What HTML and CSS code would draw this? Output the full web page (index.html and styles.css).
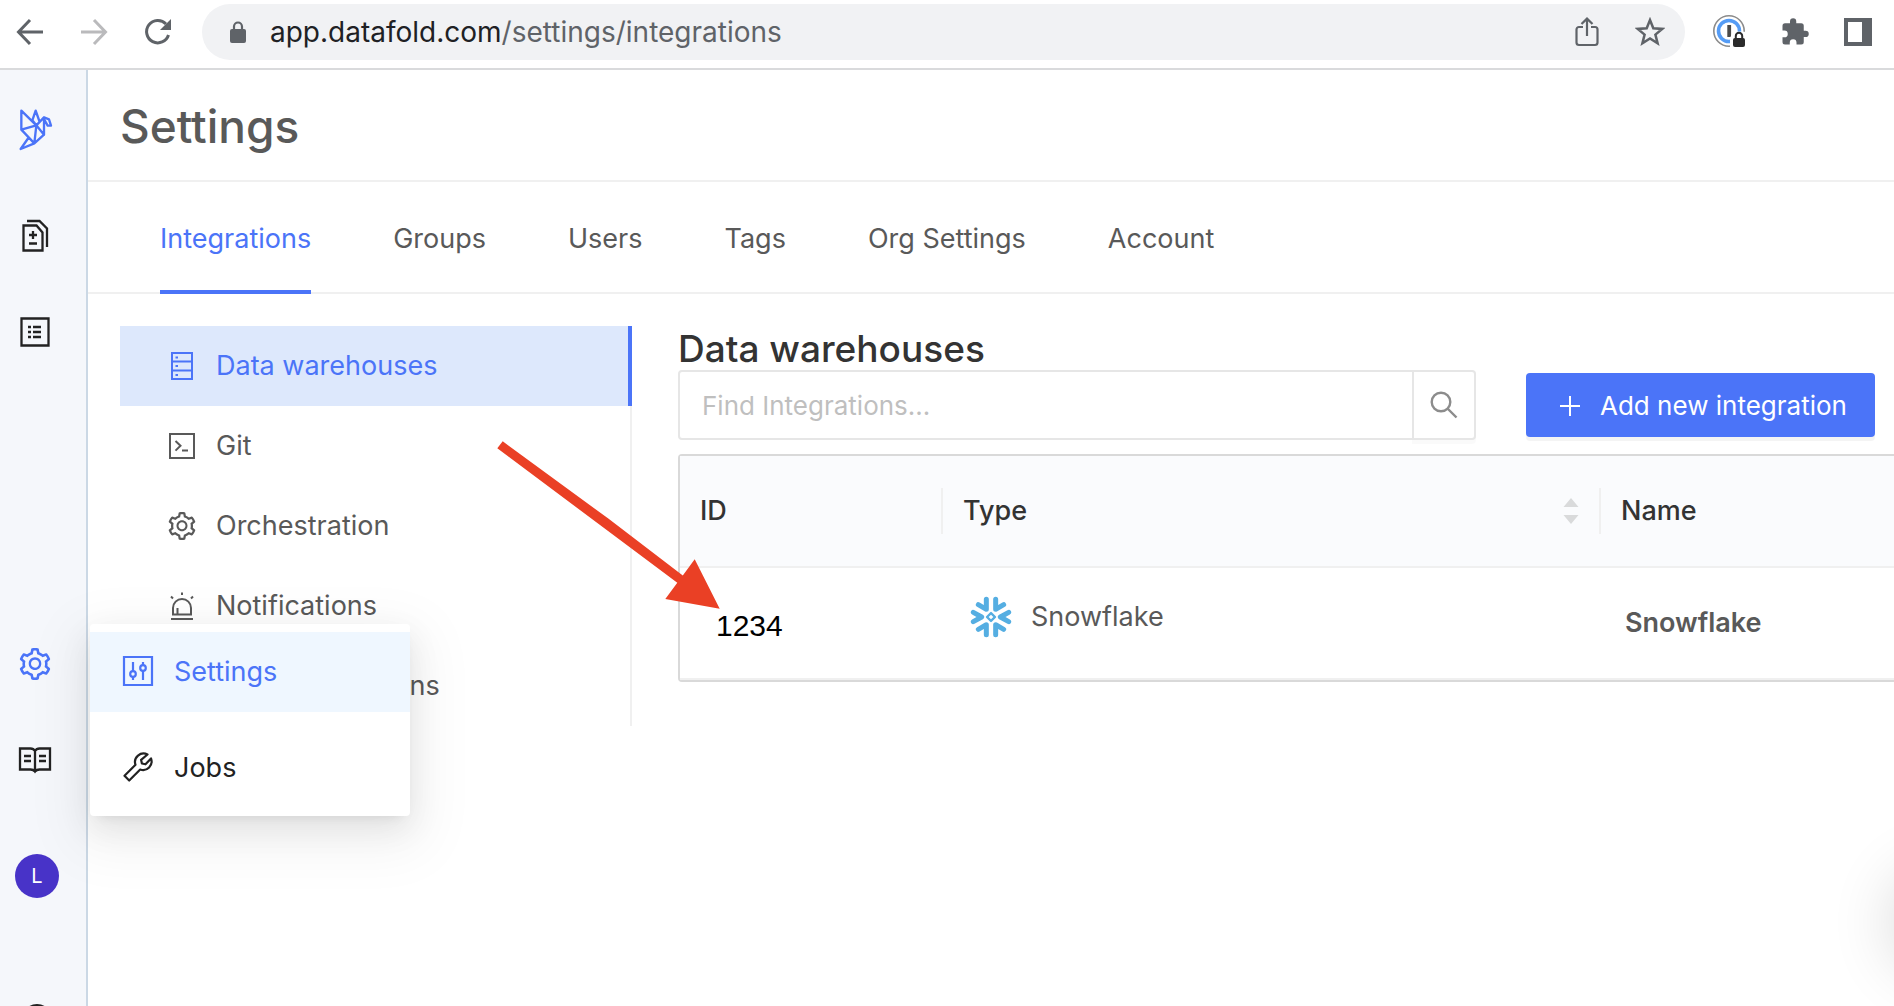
FILE: index.html
```html
<!DOCTYPE html>
<html lang="en">
<head>
<meta charset="utf-8">
<title>Settings – Integrations</title>
<link rel="stylesheet" href="styles.css">
</head>
<body>
<svg class="sprite" aria-hidden="true">
  <symbol id="gear" viewBox="64 64 896 896"><path fill="currentColor" d="M924.8 625.7l-65.5-56c3.1-19 4.7-38.4 4.7-57.8s-1.6-38.8-4.7-57.8l65.5-56a32.03 32.03 0 009.3-35.2l-.9-2.6a443.74 443.74 0 00-79.7-137.9l-1.8-2.1a32.12 32.12 0 00-35.1-9.5l-81.3 28.9c-30-24.6-63.5-44-99.7-57.6l-15.7-85a32.05 32.05 0 00-25.8-25.7l-2.7-.5c-52.1-9.4-106.9-9.4-159 0l-2.7.5a32.05 32.05 0 00-25.8 25.7l-15.8 85.4a351.86 351.86 0 00-99 57.4l-81.9-29.1a32 32 0 00-35.1 9.5l-1.8 2.1a446.02 446.02 0 00-79.7 137.9l-.9 2.6c-4.5 12.5-.8 26.5 9.3 35.2l66.3 56.6c-3.1 18.8-4.6 38-4.6 57.1 0 19.2 1.5 38.4 4.6 57.1L99 625.5a32.03 32.03 0 00-9.3 35.2l.9 2.6c18.1 50.4 44.9 96.9 79.7 137.9l1.8 2.1a32.12 32.12 0 0035.1 9.5l81.9-29.1c29.8 24.5 63.1 43.9 99 57.4l15.8 85.4a32.05 32.05 0 0025.8 25.7l2.7.5a449.4 449.4 0 00159 0l2.7-.5a32.05 32.05 0 0025.8-25.7l15.7-85a350 350 0 0099.7-57.6l81.3 28.9a32 32 0 0035.1-9.5l1.8-2.1c34.8-41.1 61.6-87.5 79.7-137.9l.9-2.6c4.5-12.3.8-26.3-9.3-35zM788.3 465.9c2.5 15.1 3.8 30.6 3.8 46.1s-1.3 31-3.8 46.1l-6.6 40.1 74.7 63.9a370.03 370.03 0 01-42.6 73.6L721 702.8l-31.4 25.8c-23.9 19.6-50.5 35-79.3 45.8l-38.1 14.3-17.9 97a377.5 377.5 0 01-85 0l-17.9-97.2-37.8-14.5c-28.5-10.8-55-26.2-78.7-45.7l-31.4-25.9-93.4 33.2c-17-22.9-31.2-47.6-42.6-73.6l75.5-64.5-6.5-40c-2.4-14.9-3.7-30.3-3.7-45.5 0-15.3 1.2-30.6 3.7-45.5l6.5-40-75.5-64.5c11.3-26.1 25.6-50.7 42.6-73.6l93.4 33.2 31.4-25.9c23.7-19.5 50.2-34.9 78.7-45.7l37.9-14.3 17.9-97.2c28.1-3.2 56.8-3.2 85 0l17.9 97 38.1 14.3c28.7 10.8 55.4 26.2 79.3 45.8l31.4 25.8 92.8-32.9c17 22.9 31.2 47.6 42.6 73.6L781.8 426l6.5 39.9zM512 326c-97.2 0-176 78.8-176 176s78.8 176 176 176 176-78.8 176-176-78.8-176-176-176zm79.2 255.2A111.6 111.6 0 01512 614c-29.9 0-58-11.7-79.2-32.8A111.6 111.6 0 01400 502c0-29.9 11.7-58 32.8-79.2C454 401.6 482.1 390 512 390c29.9 0 58 11.6 79.2 32.8A111.6 111.6 0 01624 502c0 29.9-11.7 58-32.8 79.2z"/></symbol>
</svg>

<header class="browser">
  <div class="browser-nav">
    <button class="icon-btn" aria-label="Back"><svg width="28" height="28" viewBox="0 0 28 28" fill="none" stroke="#5f6368" stroke-width="3"><path d="M27 14H3M14 2 2.500 14 14 26"/></svg></button>
    <button class="icon-btn" aria-label="Forward"><svg width="28" height="28" viewBox="0 0 28 28" fill="none" stroke="#bababc" stroke-width="3"><path d="M1 14h24M14 2l11.500 12L14 26"/></svg></button>
    <button class="icon-btn" aria-label="Reload"><svg width="28" height="28" viewBox="0 0 28 28"><path d="M24.500 17A11.200 11.200 0 1 1 22 6" fill="none" stroke="#5f6368" stroke-width="3"/><path d="M27 1v11H16z" fill="#5f6368"/></svg></button>
  </div>
  <div class="address">
    <svg width="18" height="24" viewBox="0 0 18 24"><rect x="1" y="9" width="16" height="14" rx="2" fill="#5f6368"/><path d="M5 10V6.500a4 4 0 0 1 8 0V10" fill="none" stroke="#5f6368" stroke-width="2.200"/></svg>
    <p class="url">app.datafold.com<span>/settings/integrations</span></p>
    <button class="icon-btn" aria-label="Share"><svg width="24" height="30" viewBox="0 0 24 30" fill="none" stroke="#5f6368" stroke-width="2.200"><path d="M8 10H4a2.500 2.500 0 0 0-2.500 2.500v13A2.500 2.500 0 0 0 4 28h16a2.500 2.500 0 0 0 2.500-2.500v-13A2.500 2.500 0 0 0 20 10h-4M12 19V2M6.500 7 12 1.600 17.500 7"/></svg></button>
    <button class="icon-btn" aria-label="Bookmark"><svg width="30" height="30" viewBox="0 0 30 30" fill="none" stroke="#5f6368" stroke-width="2.500"><path d="M15 3l3.300 8.200 8.900.7-6.800 5.700 2.200 8.700L15 21.500l-7.600 4.800 2.200-8.700L2.800 11.900l8.900-.7z"/></svg></button>
  </div>
  <div class="extensions">
    <button class="icon-btn" aria-label="Password manager"><svg width="34" height="34" viewBox="0 0 34 34"><circle cx="17" cy="16" r="15.200" fill="none" stroke="#8b8b8b" stroke-width="1.600"/><circle cx="17" cy="16" r="10.500" fill="#fff" stroke="#559cf5" stroke-width="3.600"/><path d="M15.300 10h3.800v12h-3.800z" fill="#4a4a4a"/><path d="M18 23l3-6.500h9l4 .5v16H18z" fill="#fff"/><rect x="21" y="23" width="12" height="9" rx="2" fill="#2b2b2b"/><path d="M23.800 24v-3a3.200 3.200 0 0 1 6.400 0v3" fill="none" stroke="#2b2b2b" stroke-width="2"/></svg></button>
    <button class="icon-btn" aria-label="Extensions"><svg width="30" height="30" viewBox="0 0 24 24"><path fill="#5f6368" d="M20.500 11H19V7a2 2 0 0 0-2-2h-4V3.500a2.500 2.500 0 0 0-5 0V5H4a2 2 0 0 0-2 2v3.800h1.500a2.700 2.700 0 0 1 0 5.400H2V20a2 2 0 0 0 2 2h3.800v-1.500a2.700 2.700 0 0 1 5.400 0V22H17a2 2 0 0 0 2-2v-4h1.500a2.500 2.500 0 0 0 0-5z"/></svg></button>
    <button class="icon-btn" aria-label="Side panel"><svg width="28" height="28" viewBox="0 0 28 28"><path fill="#5f6368" fill-rule="evenodd" d="M0 0h28v28H0zM4 4v20h14V4z"/></svg></button>
  </div>
</header>

<div class="app">
  <nav class="sidebar" aria-label="Main">
    <a class="logo" href="#" aria-label="Datafold"><svg width="35" height="43" viewBox="55 85 105 129" fill="none" stroke="#4b74f8" stroke-width="7" stroke-linejoin="round" stroke-linecap="round"><path d="M65 93l45 44-45 13zM98 122l10-29 11 31M98 122l12 15 23-24v52l-23-28-6 54 29-26M65 150l39 41-41 17 23-33M133 113l15 6 6 19h-10l-11-20"/></svg></a>
    <a class="side-link" href="#" aria-label="Data diffs"><svg width="28" height="34" viewBox="0 0 28 34" fill="none" stroke="#222" stroke-width="2.300"><path d="M2.500 6.500h13l6 7V31.500h-19zM6 2h12.500L26 9.500V28M12 12v8M8 16h8M8 24.500h8"/></svg></a>
    <a class="side-link" href="#" aria-label="Catalog"><svg width="30" height="30" viewBox="0 0 30 30" fill="none" stroke="#222" stroke-width="2.300"><path d="M1.500 1.500h27v27h-27zM13 10h8M13 15h8M13 20h8M8 10h3M8 15h3M8 20h3"/></svg></a>
    <div class="sidebar-bottom">
      <a class="side-link current" href="#" aria-label="Settings menu"><svg width="32" height="32"><use href="#gear"/></svg></a>
      <a class="side-link" href="#" aria-label="Documentation"><svg width="34" height="28" viewBox="0 0 34 28" fill="none" stroke="#222" stroke-width="2.300"><path d="M2 2.500h10.500q3 0 4.500 2.500 1.500-2.500 4.500-2.500H32v21H21.500q-3 0-4.500 2-1.500-2-4.500-2H2zM17 5v20M6 10h7M6 15h7M21 10h7M21 15h7"/></svg></a>
      <div class="side-user"><button class="avatar">L</button></div>
      <a class="side-more" href="#" aria-label="Help"><svg width="30" height="30" viewBox="0 0 30 30"><circle cx="15" cy="15" r="13.500" fill="none" stroke="#222" stroke-width="3"/></svg></a>
    </div>
  </nav>

  <main class="page">
    <h1 class="page-title">Settings</h1>
    <nav class="tabs" aria-label="Settings sections">
      <a class="tab active" href="#">Integrations</a>
      <a class="tab" href="#">Groups</a>
      <a class="tab" href="#">Users</a>
      <a class="tab" href="#">Tags</a>
      <a class="tab" href="#">Org Settings</a>
      <a class="tab" href="#">Account</a>
    </nav>
    <div class="columns">
      <nav class="menu" aria-label="Integration types">
        <a class="menu-item active" href="#"><svg width="28" height="28" viewBox="0 0 28 28" fill="none" stroke="currentColor" stroke-width="2"><path d="M4 1h20v26H4zM4 9.500h20M4 18.500h20M7.500 5.500h2.500M7.500 14H10M7.500 23H10"/></svg>Data warehouses</a>
        <a class="menu-item" href="#"><svg width="28" height="28" viewBox="0 0 28 28" fill="none" stroke="currentColor" stroke-width="2"><path d="M2 2h24v24H2zM7.500 9l5 4.800-5 4.800M14 18.500h6"/></svg>Git</a>
        <a class="menu-item" href="#"><svg width="28" height="28"><use href="#gear"/></svg>Orchestration</a>
        <a class="menu-item" href="#"><svg width="28" height="28" viewBox="0 0 28 28" fill="none" stroke="currentColor" stroke-width="2"><path d="M5 22.500V16a9 9 0 0 1 18 0v6.500zM3 27h22M9.500 22v-6M14 .5V3M3 4.500 5 6.500M25 4.500 23 6.500"/></svg>Notifications</a>
        <a class="menu-item" href="#"><svg width="28" height="28" viewBox="0 0 28 28" fill="none" stroke="currentColor" stroke-width="2"><path d="M2 2h24v24H2zM8 20v-6M14 20V8M20 20v-9"/></svg>Data Applications</a>
      </nav>
      <section class="content">
        <h2 class="section-title">Data warehouses</h2>
        <div class="toolbar">
          <form class="search">
            <input class="search-input" type="text" placeholder="Find Integrations..." aria-label="Find Integrations">
            <button class="search-btn" type="button" aria-label="Search"><svg width="28" height="28" viewBox="0 0 28 28" fill="none" stroke="#8c8c8c" stroke-width="2.400"><circle cx="11" cy="11" r="9.300"/><path d="M17.500 17.500l9 9"/></svg></button>
          </form>
          <button class="add-btn"><svg width="20" height="20" viewBox="0 0 20 20" stroke="#fff" stroke-width="2"><path d="M10 0v20M0 10h20"/></svg>Add new integration</button>
        </div>
        <table class="grid">
          <thead>
            <tr>
              <th class="col-id"><div class="head">ID</div></th>
              <th class="col-type"><div class="head">Type<svg width="16" height="26" viewBox="0 0 16 26" fill="#d9dadb"><path d="M8 0l7.500 9H.5zM8 26l7.500-9H.5z"/></svg></div></th>
              <th><div class="head last">Name</div></th>
            </tr>
          </thead>
          <tbody>
            <tr>
              <td class="cell-id">1234</td>
              <td><div class="type">
                <svg width="42" height="42" viewBox="-63 -63 126 126" fill="none" stroke="#55aee2" stroke-width="15" stroke-linecap="round" stroke-linejoin="round"><rect x="-8.500" y="-8.500" width="17" height="17" transform="rotate(45)" stroke-width="7"/><path d="M-14-53v30l-24-14M14-53v30l24-14M-14 53V23l-24 14M14 53V23l24 14M-53-14l25 14-25 14M53-14L28 0l25 14"/></svg>
                Snowflake</div></td>
              <td class="cell-name">Snowflake</td>
            </tr>
          </tbody>
        </table>
      </section>
    </div>
  </main>

  <div class="popup">
    <a class="popup-item active" href="#"><svg width="32" height="32" viewBox="0 0 32 32" fill="none" stroke="currentColor" stroke-width="2.200"><path d="M2 1h28v28H2zM11 6v9M11 21v3M21 6v3M21 15v9"/><circle cx="11" cy="18" r="2.800"/><circle cx="21" cy="12" r="2.800"/></svg>Settings</a>
    <a class="popup-item" href="#"><svg width="32" height="32" viewBox="0 0 32 32" fill="none" stroke="currentColor" stroke-width="2.200" stroke-linejoin="round"><path d="M25.500 2.500a8.500 8.500 0 0 0-12 10.300L2.500 23.800l4.700 4.700 11-11A8.500 8.500 0 0 0 29 6.500l-5.500 5.800-3.600-.8-.8-3.700z"/></svg>Jobs</a>
  </div>

  <svg class="pointer" width="224" height="170" viewBox="0 0 224 170" aria-hidden="true"><path fill="#ea4025" d="M6.700 1.300l105.600 77.300 74.500 56.900 11.900-16.200 25 49.400-54.400-9.700 12-16.300L1.300 8.300z"/></svg>
  <div class="chat-shadow"></div>
</div>
</body>
</html>
```
FILE: styles.css
```css
* { box-sizing: border-box; }

body {
  margin: 0;
  height: 100vh;
  display: flex;
  flex-direction: column;
  overflow: hidden;
  background: #fff;
  color: #595959;
  font: 27px/40px Inter, "Liberation Sans", sans-serif;
}

a { color: inherit; text-decoration: none; }
button, input { font: inherit; }
svg { display: block; flex: none; }
.sprite { position: absolute; width: 0; height: 0; }

/* Browser bar */
.browser {
  display: flex;
  align-items: center;
  height: 70px;
  padding: 2px 22px 6px 16px;
  border-bottom: 2px solid #d9dadc;
}
.browser-nav { display: flex; gap: 36px; margin-right: 30px; }
.icon-btn { padding: 0; border: 0; background: none; }
.address {
  flex: 1;
  display: flex;
  align-items: center;
  gap: 36px;
  height: 56px;
  padding: 0 20px 0 27px;
  border-radius: 28px;
  background: #f1f2f4;
}
.url { flex: 1; margin: 0 0 0 -13px; color: #202124; font-size: 28px; }
.url span { color: #5f6368; }
.extensions { display: flex; align-items: center; gap: 34px; margin-left: 27px; }

/* Application frame */
.app { position: relative; flex: 1; min-height: 0; display: flex; overflow: hidden; }

.sidebar {
  display: flex;
  flex-direction: column;
  width: 88px;
  background: #f5f7fb;
  border-right: 2px solid #cbd8e5;
}
.logo { display: flex; justify-content: center; padding: 38px 16px 37px 0; }
.side-link {
  display: flex;
  align-items: center;
  justify-content: center;
  height: 96px;
  padding-right: 16px;
}
.side-link.current { color: #4b74f8; }
.sidebar-bottom { margin-top: auto; }
.side-user { display: flex; align-items: center; height: 136px; padding-left: 15px; }
.avatar {
  width: 44px;
  height: 44px;
  padding: 0;
  border: 0;
  border-radius: 50%;
  background: #4833c8;
  color: #fff;
  font-size: 20px;
}
.side-more {
  display: flex;
  justify-content: center;
  height: 62px;
  padding: 60px 12px 0 0;
  overflow: hidden;
}

.page { flex: 1; min-width: 0; }
.page-title {
  margin: 0;
  padding: 28px 32px 26px;
  border-bottom: 2px solid #f0f0f0;
  font-size: 46px;
  font-weight: 500;
  line-height: 56px;
}
.tabs {
  display: flex;
  gap: 82px;
  height: 112px;
  padding: 0 72px;
  border-bottom: 2px solid #f0f0f0;
}
.tab { margin-bottom: -2px; padding-top: 37px; }
.tab.active { color: #4b74f8; border-bottom: 4px solid #4b74f8; }

.columns { display: flex; padding: 32px 0 0 32px; }

.menu { width: 512px; height: 400px; border-right: 2px solid #f0f0f0; }
.menu-item {
  display: flex;
  align-items: center;
  gap: 20px;
  height: 80px;
  padding-left: 48px;
}
.menu-item.active {
  margin-right: -2px;
  border-right: 4px solid #4b74f8;
  background: #dde8fc;
  color: #4b74f8;
}

.content { flex: 1; min-width: 0; margin-left: 46px; }
.section-title { margin: 0; padding: 3px 0 1px; color: #333; font-size: 37px; font-weight: 500; }
.toolbar { display: flex; align-items: center; gap: 50px; padding-right: 19px; }
.search { flex: 1; min-width: 0; display: flex; height: 70px; }
.search-input {
  flex: 1;
  min-width: 0;
  padding: 2px 22px 0;
  border: 2px solid #e6e6e6;
  border-radius: 4px 0 0 4px;
  font-size: 26px;
}
.search-input::placeholder { color: #bfbfbf; }
.search-btn {
  display: flex;
  align-items: center;
  justify-content: center;
  width: 64px;
  margin-left: -2px;
  border: 2px solid #e6e6e6;
  border-radius: 0 4px 4px 0;
  background: #fff;
  box-shadow: 0 4px 0 rgba(0, 0, 0, 0.02);
}
.add-btn {
  display: flex;
  align-items: center;
  gap: 20px;
  width: 349px;
  height: 64px;
  padding: 2px 34px 0;
  border: 0;
  border-radius: 4px;
  background: #4b74f8;
  color: #fff;
  font-size: 26px;
  white-space: nowrap;
  box-shadow: 0 4px 0 rgba(0, 0, 0, 0.045);
}

.grid {
  width: 100%;
  margin-top: 14px;
  border: 2px solid #d9d9d9;
  border-right: 0;
  border-radius: 4px 0 0 4px;
  border-spacing: 0;
  table-layout: fixed;
}
.grid th, .grid td { height: 112px; padding: 0; border-bottom: 2px solid #f0f0f0; text-align: left; }
.grid th { background: #fafbfd; color: #333; font-weight: 500; }
.col-id { width: 263px; }
.col-type { width: 658px; }
.head {
  display: flex;
  align-items: center;
  justify-content: space-between;
  height: 46px;
  padding: 0 20px;
  border-right: 2px solid #f0f0f0;
}
.head.last { border-right: 0; }
.grid .cell-id {
  padding: 6px 0 0 36px;
  color: #000;
  font-family: "Liberation Sans", sans-serif;
  font-size: 30px;
}
.type { display: flex; align-items: center; gap: 19px; padding: 0 0 12px 27px; }
.grid .cell-name { padding-left: 24px; font-weight: 600; }

/* Fly-out menu beside the sidebar */
.popup {
  position: absolute;
  left: 90px;
  bottom: 190px;
  width: 320px;
  padding: 8px 0;
  display: flex;
  flex-direction: column;
  gap: 16px;
  border-radius: 4px;
  background: #fff;
  color: #222;
  box-shadow: 0 6px 12px -8px rgba(0, 0, 0, 0.12), 0 12px 32px rgba(0, 0, 0, 0.08), 0 18px 56px 16px rgba(0, 0, 0, 0.05);
}
.popup-item { display: flex; align-items: center; gap: 20px; height: 80px; padding-left: 32px; }
.popup-item.active { background: #eff7ff; color: #4b74f8; }

.pointer { position: absolute; left: 496px; top: 370px; }
.chat-shadow {
  position: absolute;
  right: -98px;
  bottom: 36px;
  width: 96px;
  height: 96px;
  border-radius: 50%;
  box-shadow: 0 0 64px 4px rgba(0, 0, 0, 0.16);
}
```
